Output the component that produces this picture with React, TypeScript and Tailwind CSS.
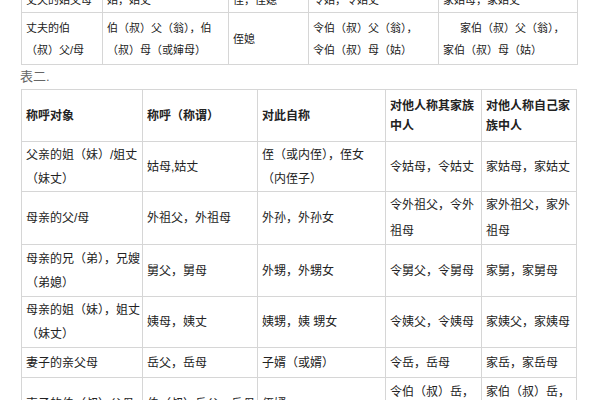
import React from "react";

const cell = "border border-[#d6d6d6] px-[4px] align-middle text-left whitespace-nowrap";

export default function App() {
  return (
    <div className="w-[600px] h-[400px] overflow-hidden bg-white text-[#222] text-[12px] leading-[22px] font-['Liberation_Sans','Noto_Sans_CJK_SC',sans-serif]">
      <div className="pl-[21px]">
        <table className="table-fixed border-collapse mt-[-14px] w-[556px] text-[11px]">
          <colgroup>
            <col className="w-[81px]" />
            <col className="w-[126px]" />
            <col className="w-[80px]" />
            <col className="w-[130px]" />
            <col className="w-[139px]" />
          </colgroup>
          <tbody>
            <tr className="h-[26px]">
              <td className={cell}>丈夫的姑父母</td>
              <td className={cell}>姑，姑丈</td>
              <td className={cell}>侄，侄媳</td>
              <td className={cell}>令姑，令姑丈</td>
              <td className={cell}>家姑母，家姑丈</td>
            </tr>
            <tr className="h-[52px]">
              <td className={cell}>
                丈夫的伯
                <br />
                （叔）父/母
              </td>
              <td className={cell}>
                伯（叔）父（翁），伯
                <br />
                （叔）母（或婶母）
              </td>
              <td className={cell}>侄媳</td>
              <td className={cell}>
                令伯（叔）父（翁），
                <br />
                令伯（叔）母（姑）
              </td>
              <td className={cell}>
                <div className="indent-[17px]">家伯（叔）父（翁），</div>
                <div>家伯（叔）母（姑）</div>
              </td>
            </tr>
          </tbody>
        </table>
        <div className="h-[24px] leading-[24px] text-[13px] text-[#666] ml-[-1px]">表二.</div>
        <table className="table-fixed border-collapse w-[555px] leading-[24px]">
          <colgroup>
            <col className="w-[121px]" />
            <col className="w-[115px]" />
            <col className="w-[128px]" />
            <col className="w-[96px]" />
            <col className="w-[95px]" />
          </colgroup>
          <tbody>
            <tr className="h-[52px] font-bold">
              <td className={cell}>称呼对象</td>
              <td className={cell}>称呼（称谓）</td>
              <td className={cell}>对此自称</td>
              <td className={cell + " leading-[20px]"}>
                对他人称其家族
                <br />
                中人
              </td>
              <td className={cell + " leading-[20px]"}>
                对他人称自己家
                <br />
                族中人
              </td>
            </tr>
            <tr className="h-[50px]">
              <td className={cell}>
                父亲的姐（妹）/姐丈
                <br />
                （妹丈）
              </td>
              <td className={cell}>姑母,姑丈</td>
              <td className={cell}>
                侄（或内侄），侄女
                <br />
                （内侄子）
              </td>
              <td className={cell}>令姑母，令姑丈</td>
              <td className={cell}>家姑母，家姑丈</td>
            </tr>
            <tr className="h-[52px]">
              <td className={cell}>母亲的父/母</td>
              <td className={cell}>外祖父，外祖母</td>
              <td className={cell}>外孙，外孙女</td>
              <td className={cell + " leading-[26px]"}>
                令外祖父，令外
                <br />
                祖母
              </td>
              <td className={cell + " leading-[26px]"}>
                家外祖父，家外
                <br />
                祖母
              </td>
            </tr>
            <tr className="h-[52px]">
              <td className={cell}>
                母亲的兄（弟），兄嫂
                <br />
                （弟媳）
              </td>
              <td className={cell}>舅父，舅母</td>
              <td className={cell}>外甥，外甥女</td>
              <td className={cell}>令舅父，令舅母</td>
              <td className={cell}>家舅，家舅母</td>
            </tr>
            <tr className="h-[51px]">
              <td className={cell}>
                母亲的姐（妹），姐丈
                <br />
                （妹丈）
              </td>
              <td className={cell}>姨母，姨丈</td>
              <td className={cell}>姨甥，姨 甥女</td>
              <td className={cell}>令姨父，令姨母</td>
              <td className={cell}>家姨父，家姨母</td>
            </tr>
            <tr className="h-[30px]">
              <td className={cell}>妻子的亲父母</td>
              <td className={cell}>岳父，岳母</td>
              <td className={cell}>子婿（或婿）</td>
              <td className={cell}>令岳，岳母</td>
              <td className={cell}>家岳，家岳母</td>
            </tr>
            <tr className="h-[52px]">
              <td className={cell}>妻子的伯（叔）父母</td>
              <td className={cell}>伯（叔）岳父，岳母</td>
              <td className={cell}>侄婿</td>
              <td className={cell}>
                令伯（叔）岳，
                <br />
                令伯（叔）岳母
              </td>
              <td className={cell}>
                家伯（叔）岳，
                <br />
                家伯（叔）岳母
              </td>
            </tr>
          </tbody>
        </table>
      </div>
    </div>
  );
}
